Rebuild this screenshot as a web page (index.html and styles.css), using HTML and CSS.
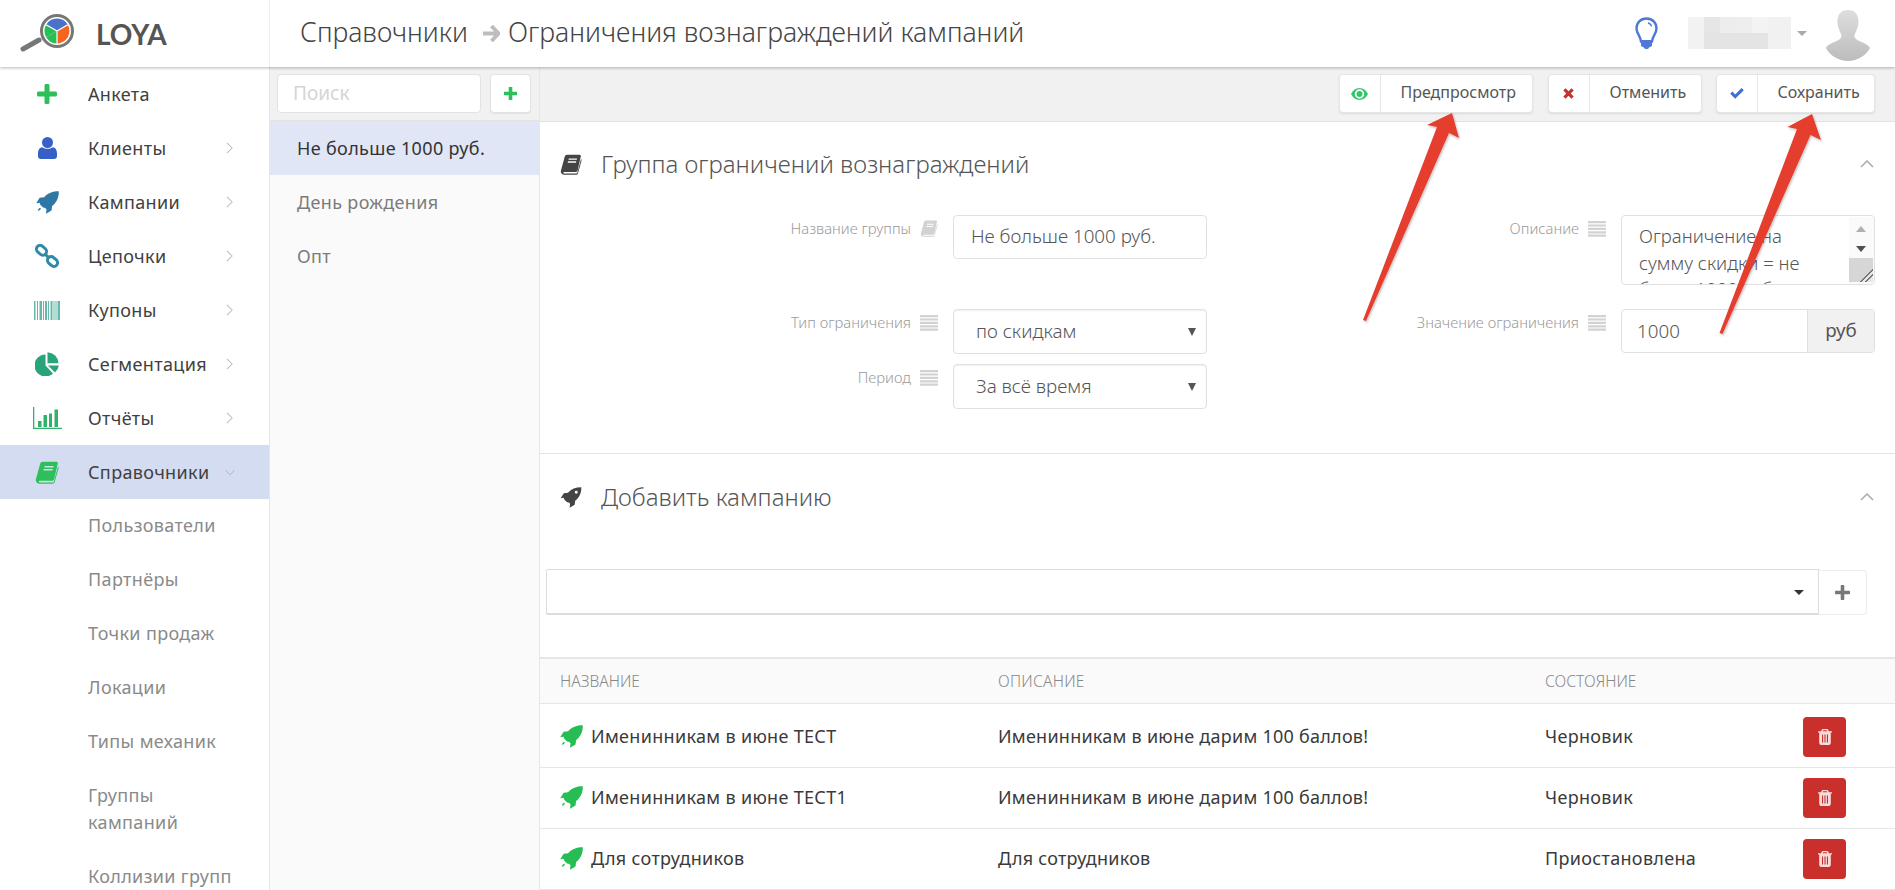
FILE: index.html
```html
<!DOCTYPE html>
<html lang="ru">
<head>
<meta charset="utf-8">
<title>LOYA</title>
<link rel="stylesheet" href="styles.css">
</head>
<body>
<svg class="defs" width="0" height="0" aria-hidden="true">
  <symbol id="i-rocket" viewBox="0 0 24 24"><path d="M23.800.2c.2 6.300-2 11.600-7 15.500l-.6 4.600-5.800 3.500.6-4.800-1.700-1.600c-.9.600-2-.2-3.500-1.700s-2.300-2.600-1.700-3.500L.2 12.800 3.800 7l4.700-.5C12.200 2.200 17.500.2 23.800.2z"/><path d="M4.300 17.400c-1.200.4-2 1.300-2.500 3.300 2-.5 2.900-1.300 3.300-2.500z"/></symbol>
  <symbol id="i-rocket-w" viewBox="0 0 24 24"><path fill-rule="evenodd" d="M23.800.2c.2 6.300-2 11.600-7 15.500l-.6 4.600-5.800 3.500.6-4.800-1.700-1.600c-.9.600-2-.2-3.500-1.700s-2.300-2.600-1.700-3.500L.2 12.800 3.800 7l4.700-.5C12.200 2.200 17.500.2 23.800.2zM18 4.300a1.700 1.700 0 1 0 0 3.400 1.700 1.700 0 0 0 0-3.400z"/></symbol>
  <symbol id="i-book" viewBox="0 0 24 24"><path fill-rule="evenodd" d="M7.500.8H21.800c1.100 0 1.700.9 1.400 2L19.500 18.800c-.4 1.300-1.300 1.900-2.500 1.900H4.600c-1 0-1.500.5-1.300 1 .2.500.6.7 1.300.7H18c.6 0 1-.3 1.200-.9L23.500 5.800c.6.400.8 1.100.5 2l-4 14.200c-.4 1.200-1.300 1.800-2.500 1.800H4.300C2.300 23.800.6 22.400.4 20.600c-.1-.6 0-1.100.1-1.700L4.800 3c.4-1.300 1.400-2.200 2.700-2.200zM9.500 5.200l-.4 1.500h9.500l.4-1.500zM8.600 8.400l-.4 1.500h9.500l.4-1.500z"/></symbol>
  <symbol id="i-lines" viewBox="0 0 18 16"><path d="M0 0h18v2.200H0zM0 3.400h18v2.200H0zM0 6.800h18v2.200H0zM0 10.200h18v2.200H0zM0 13.600h18v2.200H0z"/></symbol>
  <symbol id="i-chev" viewBox="0 0 8 14"><path d="M1 1l6 6-6 6" fill="none" stroke="currentColor" stroke-width="1.200"/></symbol>
  <symbol id="i-trash" viewBox="0 0 14 16"><path fill-rule="evenodd" d="M5 0h4c.7 0 1.200.4 1.400 1l.5 1.200H14v1.300h-1.200v10.300c0 1.200-.8 2.200-1.800 2.200H3c-1 0-1.800-1-1.800-2.200V3.500H0V2.200h3.100L3.600 1C3.800.4 4.300 0 5 0zm-.3 2.200h4.600L8.900 1.200H5.100zM4 5.500v8h1.100v-8zm2.450 0v8h1.100v-8zm2.450 0v8H10v-8z"/></symbol>
</svg>

<div class="app">
  <header class="header">
    <div class="brand">
      <svg class="logo" width="58" height="44" viewBox="0 0 58 44">
        <path d="M5 36l16-9" stroke="#777" stroke-width="5" stroke-linecap="round"/>
        <circle cx="39" cy="18" r="15.500" fill="#fff" stroke="#777" stroke-width="3"/>
        <path d="M39 18V5.500a12.500 12.500 0 0 0-10.800 6.300z" fill="#4a72c9"/>
        <path d="M39 18V5.500a12.500 12.500 0 0 1 10.800 6.300z" fill="#4a72c9"/>
        <path d="M39 18l-10.800 6.200A12.500 12.500 0 0 0 39 30.500z" fill="#26bf55"/>
        <path d="M39 18l-10.800-6.200a12.500 12.500 0 0 0 0 12.400z" fill="#26bf55"/>
        <path d="M39 18v12.500a12.500 12.500 0 0 0 10.800-18.700z" fill="#f5651f"/>
        <path d="M39 18v12.500M39 18l-10.800-6.200M39 18l10.800-6.200" stroke="#fff" stroke-width="1.200" fill="none"/>
      </svg>
      <span class="brand-name">LOYA</span>
    </div>
    <h1 class="crumbs">
      <span>Справочники</span>
      <svg class="crumb-arrow" width="18" height="17" viewBox="0 0 18 17"><path d="M9.500 1l7 7.500-7 7.500M1 8.500h15" fill="none" stroke="#bdbdbd" stroke-width="4"/></svg>
      <span>Ограничения вознаграждений кампаний</span>
    </h1>
    <div class="user">
      <svg class="bulb" width="23" height="34" viewBox="0 0 23 34">
        <path d="M11.500 1.500C5.500 1.500 1.500 6 1.500 11.500c0 5 4 7.500 4.500 13h11c.5-5.500 4.500-8 4.500-13 0-5.500-4-10-10-10z" fill="#fff" stroke="#4f78d8" stroke-width="2.400"/>
        <path d="M6 23h11v6l-3 1.500c-.5 2-4.500 2-5 0L6 29z" fill="#4f78d8"/>
        <path d="M13 6c2 .5 3.200 1.800 3.500 3.500" fill="none" stroke="#4f78d8" stroke-width="1.300"/>
      </svg>
      <div class="blur-name" aria-hidden="true"><i></i><i></i><i></i><i></i><i></i><i></i></div>
      <span class="user-caret"></span>
      <svg class="avatar" width="46" height="52" viewBox="0 0 46 52">
        <defs><linearGradient id="ag" x1="0" y1="0" x2="0" y2="1"><stop offset="0" stop-color="#dedede"/><stop offset="1" stop-color="#bcbcbc"/></linearGradient></defs>
        <path d="M23 1c7 0 10.500 4.500 10.500 11 0 3-.5 5-1.500 8-1 3-2 4-2.500 6.500-.3 1.500.5 3 3 4.500 4.500 2.500 10.500 4 12.500 8-4 7.500-12.500 13-22 13S4.900 46.500.9 39c2-4 8-5.500 12.500-8 2.500-1.500 3.300-3 3-4.500-.5-2.500-1.500-3.500-2.500-6.500-1-3-1.500-5-1.500-8C12.400 5.500 16 1 23 1z" fill="url(#ag)"/>
      </svg>
    </div>
  </header>

  <nav class="sidebar">
    <a class="nav-item"><span class="nav-icon"><svg width="20" height="20" viewBox="0 0 20 20"><path d="M7.500 1.500c0-.8.600-1.500 1.500-1.500h2c.8 0 1.500.7 1.500 1.500v6h6c.8 0 1.500.6 1.500 1.500v2c0 .8-.7 1.500-1.500 1.500h-6v6c0 .8-.7 1.500-1.500 1.500H9c-.9 0-1.500-.7-1.500-1.500v-6h-6C.7 12.500 0 11.800 0 11V9c0-.9.700-1.500 1.500-1.500h6z" fill="#2dc05a"/></svg></span>Анкета</a>
    <a class="nav-item"><span class="nav-icon"><svg width="19" height="22" viewBox="0 0 19 22"><circle cx="9.500" cy="5.500" r="5.500" fill="#3560c8"/><path d="M4.500 10.200c1.300 1 3 1.600 5 1.600s3.700-.6 5-1.600c2.800.2 4.500 2.500 4.500 6.300V19c0 1.800-1.200 3-3 3H3c-1.800 0-3-1.200-3-3v-2.500c0-3.800 1.700-6.100 4.500-6.300z" fill="#3560c8"/></svg></span>Клиенты<svg class="chev"><use href="#i-chev"/></svg></a>
    <a class="nav-item"><span class="nav-icon"><svg class="tint-rocket" width="23" height="23"><use href="#i-rocket"/></svg></span>Кампании<svg class="chev"><use href="#i-chev"/></svg></a>
    <a class="nav-item"><span class="nav-icon"><svg width="24" height="24" viewBox="0 0 24 24" fill="none" stroke="#2e8aa6" stroke-width="3"><rect x="-5.500" y="-3.700" width="11" height="7.400" rx="3.700" transform="translate(6.500 6.300) rotate(42)"/><rect x="-5.500" y="-3.700" width="11" height="7.400" rx="3.700" transform="translate(17.500 17.500) rotate(42)"/><path d="M10 10l4 4"/></svg></span>Цепочки<svg class="chev"><use href="#i-chev"/></svg></a>
    <a class="nav-item"><span class="nav-icon"><svg width="26" height="19" viewBox="0 0 26 19"><path d="M0 0h1.500v19H0zM3 0h1v19H3zM5.500 0h2.500v19H5.500zM9 0h1v19H9zM11 0h2v19h-2zM14 0h1v19h-1zM16.500 0h2v19h-2zM19.500 0h1v19h-1zM21.500 0h1v19h-1zM23.500 0h2.500v19h-2.500z" fill="#66b8ab"/></svg></span>Купоны<svg class="chev"><use href="#i-chev"/></svg></a>
    <a class="nav-item"><span class="nav-icon"><svg width="24" height="24" viewBox="0 0 24 24"><path d="M10.500 2.500v11l7.500 8A11 11 0 1 1 10.500 2.500z" fill="#29a379"/><path d="M12.500.2a11.500 11.500 0 0 1 11 11h-11z" fill="#29a379"/><path d="M13 13.500h10.800a11 11 0 0 1-3.800 7z" fill="#29a379"/></svg></span>Сегментация<svg class="chev"><use href="#i-chev"/></svg></a>
    <a class="nav-item"><span class="nav-icon"><svg width="29" height="22" viewBox="0 0 29 22"><path d="M0 0h1.300v20.700H29V22H0zM5 14h3.500v6H5zM10.500 8h3.500v12h-3.500zM16 6.500h3v13.500h-3zM21.500 2.500h3.500V20h-3.500z" fill="#2fb36b"/></svg></span>Отчёты<svg class="chev"><use href="#i-chev"/></svg></a>
    <a class="nav-item is-active"><span class="nav-icon"><svg class="tint-book" width="24" height="23"><use href="#i-book"/></svg></span>Справочники<svg class="chev chev-down"><use href="#i-chev"/></svg></a>
    <a class="nav-sub">Пользователи</a>
    <a class="nav-sub">Партнёры</a>
    <a class="nav-sub">Точки продаж</a>
    <a class="nav-sub">Локации</a>
    <a class="nav-sub">Типы механик</a>
    <a class="nav-sub">Группы<br>кампаний</a>
    <a class="nav-sub">Коллизии групп</a>
  </nav>

  <aside class="list-panel">
    <div class="list-search">
      <div class="search-input">Поиск</div>
      <div class="search-add"><svg width="13" height="13" viewBox="0 0 13 13"><path d="M4.700 0h3.600v4.700H13v3.600H8.300V13H4.700V8.300H0V4.700h4.700z" fill="#2dc05a"/></svg></div>
    </div>
    <div class="list-row is-selected">Не больше 1000 руб.</div>
    <div class="list-row">День рождения</div>
    <div class="list-row">Опт</div>
  </aside>

  <main class="main">
    <div class="toolbar">
      <div class="tbtn tbtn-1"><span class="tbtn-icon"><svg width="17" height="12" viewBox="0 0 17 12"><path fill-rule="evenodd" d="M8.500 0c3.600 0 6.700 2.200 8.500 6-1.800 3.800-4.900 6-8.500 6S1.800 9.800 0 6c1.800-3.800 4.900-6 8.500-6zm0 1.300a4.700 4.700 0 1 0 0 9.400 4.700 4.700 0 0 0 0-9.400zM8.500 3a3 3 0 1 1 0 6 3 3 0 0 1 0-6z" fill="#35c56a"/></svg></span><span class="tbtn-text">Предпросмотр</span></div>
      <div class="tbtn tbtn-2"><span class="tbtn-icon"><svg width="11" height="11" viewBox="0 0 11 11"><path d="M2.500.3L5.500 3.300 8.500.3l2.200 2.200-3 3 3 3-2.200 2.200-3-3-3 3L.3 8.500l3-3-3-3z" fill="#c9302c"/></svg></span><span class="tbtn-text">Отменить</span></div>
      <div class="tbtn tbtn-3"><span class="tbtn-icon"><svg width="14" height="11" viewBox="0 0 14 11"><path d="M5.200 10.800L.2 5.800l2.200-2.200 2.800 2.800L11.600 0l2.200 2.200z" fill="#3f6fd1"/></svg></span><span class="tbtn-text">Сохранить</span></div>
    </div>

    <section class="section section-group">
      <div class="section-head">
        <svg class="sec-icon"><use href="#i-book"/></svg>
        <h2 class="section-title">Группа ограничений вознаграждений</h2>
        <svg class="sec-chev" width="14" height="8" viewBox="0 0 14 8"><path d="M1 7l6-6 6 6" fill="none" stroke="#aaa" stroke-width="1.500"/></svg>
      </div>
      <div class="form">
        <div class="form-col form-left">
          <div class="field field-first">
            <span class="field-label">Название группы</span>
            <svg class="label-book"><use href="#i-book"/></svg>
            <div class="control control-input">Не больше 1000 руб.</div>
          </div>
          <div class="field field-second">
            <span class="field-label">Тип ограничения</span>
            <svg class="label-lines"><use href="#i-lines"/></svg>
            <div class="control control-select">по скидкам<span class="sel-arrow"></span></div>
          </div>
          <div class="field">
            <span class="field-label">Период</span>
            <svg class="label-lines"><use href="#i-lines"/></svg>
            <div class="control control-select">За всё время<span class="sel-arrow"></span></div>
          </div>
        </div>
        <div class="form-col form-right">
          <div class="field field-area">
            <span class="field-label">Описание</span>
            <svg class="label-lines"><use href="#i-lines"/></svg>
            <div class="control control-area">
              <div class="area-text">Ограничение на<br>сумму скидки = не<br>более 1000 руб</div>
              <div class="area-scroll">
                <span class="sb-up"></span>
                <span class="sb-down"></span>
                <span class="sb-thumb"><span class="sb-grip"></span></span>
              </div>
            </div>
          </div>
          <div class="field">
            <span class="field-label">Значение ограничения</span>
            <svg class="label-lines"><use href="#i-lines"/></svg>
            <div class="control-group">
              <div class="group-input">1000</div>
              <div class="group-addon">руб</div>
            </div>
          </div>
        </div>
      </div>
    </section>

    <section class="section section-add">
      <div class="section-head">
        <svg class="sec-icon"><use href="#i-rocket-w"/></svg>
        <h2 class="section-title">Добавить кампанию</h2>
        <svg class="sec-chev" width="14" height="8" viewBox="0 0 14 8"><path d="M1 7l6-6 6 6" fill="none" stroke="#aaa" stroke-width="1.500"/></svg>
      </div>
      <div class="add-row">
        <div class="add-select"><span class="add-caret"></span></div>
        <div class="add-plus"><svg width="15" height="15" viewBox="0 0 15 15"><path d="M5.700 1c0-.5.400-1 1-1h1.600c.6 0 1 .5 1 1v4.700H14c.5 0 1 .4 1 1v1.600c0 .6-.5 1-1 1H9.300V14c0 .5-.4 1-1 1H6.700c-.6 0-1-.5-1-1V9.300H1c-.5 0-1-.4-1-1V6.700c0-.6.500-1 1-1h4.700z" fill="#777"/></svg></div>
      </div>
      <div class="table">
        <div class="t-head">
          <div class="c-name">Название</div>
          <div class="c-desc">Описание</div>
          <div class="c-state">Состояние</div>
        </div>
        <div class="t-row t-row-first">
          <div class="c-name"><svg class="row-rocket"><use href="#i-rocket"/></svg>Именинникам в июне ТЕСТ</div>
          <div class="c-desc">Именинникам в июне дарим 100 баллов!</div>
          <div class="c-state">Черновик</div>
          <div class="del"><svg width="14" height="16"><use href="#i-trash"/></svg></div>
        </div>
        <div class="t-row">
          <div class="c-name"><svg class="row-rocket"><use href="#i-rocket"/></svg>Именинникам в июне ТЕСТ1</div>
          <div class="c-desc">Именинникам в июне дарим 100 баллов!</div>
          <div class="c-state">Черновик</div>
          <div class="del"><svg width="14" height="16"><use href="#i-trash"/></svg></div>
        </div>
        <div class="t-row">
          <div class="c-name"><svg class="row-rocket"><use href="#i-rocket"/></svg>Для сотрудников</div>
          <div class="c-desc">Для сотрудников</div>
          <div class="c-state">Приостановлена</div>
          <div class="del"><svg width="14" height="16"><use href="#i-trash"/></svg></div>
        </div>
      </div>
    </section>
  </main>
</div>

<svg class="arrows" width="1895" height="890" viewBox="0 0 1895 890" aria-hidden="true">
  <defs><filter id="as" x="-20%" y="-20%" width="140%" height="140%"><feDropShadow dx="1" dy="1.500" stdDeviation="1" flood-color="#000" flood-opacity=".25"/></filter></defs>
  <path filter="url(#as)" d="M1363 320L1437 127 1427 125 1452 113 1459 138 1449 133 1366 321z" fill="#e53c2e"/>
  <path filter="url(#as)" d="M1719.500 333L1797 129 1787.500 127 1812 114 1821 140 1810.500 135 1722.500 334z" fill="#e53c2e"/>
</svg>
</body>
</html>
```
FILE: styles.css
```css
* { box-sizing: border-box; }
html, body { margin: 0; height: 890px; overflow: hidden; background: #fff; }
body { font-family: "Noto Sans", "Open Sans", sans-serif; color: #333; font-size: 18px; }
.defs { position: absolute; }
h1, h2 { margin: 0; font-weight: 300; }

.app {
  display: grid;
  grid-template-columns: 270px 270px 1fr;
  grid-template-rows: 67px 823px;
  height: 890px;
}

/* header */
.header {
  grid-column: 1 / -1;
  display: flex;
  align-items: center;
  background: #fff;
  box-shadow: 0 1px 3px rgba(0, 0, 0, .28);
  position: relative;
  z-index: 2;
}
.brand { width: 270px; height: 67px; display: flex; align-items: center; padding-left: 18px; border-right: 1px solid #f0f0f0; }
.logo { margin-top: 2px; }
.brand-name { margin-left: 20px; font-family: Lato, "Open Sans", sans-serif; font-weight: 700; font-size: 28px; color: #555; }
.crumbs { display: flex; align-items: center; margin-left: 30px; font-size: 26.600px; font-weight: 300; color: #444; margin-top: -4px; }
.crumb-arrow { margin: 3px 8px 0 14px; }
.user { margin-left: auto; display: flex; align-items: center; padding-right: 24px; }
.bulb { margin-right: 30px; }
.blur-name { width: 103px; height: 32px; display: grid; grid-template-columns: 16px 16px 16px 16px 16px 23px; grid-template-rows: 1fr 1fr; background: #f1f1f1; margin-top: -1px; }
.blur-name i { background: #e6e6e6; }
.blur-name i:nth-child(1) { background: #f2f2f2; grid-row: 1 / 3; }
.blur-name i:nth-child(3) { background: #ededed; }
.blur-name i:nth-child(4) { background: #e4e4e4; grid-column: 2 / 6; grid-row: 2; }
.blur-name i:nth-child(5) { background: #eeeeee; }
.blur-name i:nth-child(6) { background: #f3f3f3; }
.user-caret { width: 0; height: 0; margin: 0 18px 0 6px; border: 5px solid transparent; border-top: 5px solid #aaa; border-bottom: 0; }
.avatar { margin-top: 2px; }

/* sidebar */
.sidebar { background: #fff; border-right: 1px solid #e6e6e6; overflow: hidden; }
.nav-item, .nav-sub { font-size: 18px; letter-spacing: .35px; line-height: 27px; }
.nav-item { display: flex; align-items: center; height: 54px; color: #404040; }
.nav-sub { display: block; padding: 13px 0 14px 88px; color: #8a8a8a; }
.nav-item.is-active { background: #d4dcf2; }
.nav-icon { width: 34px; margin: 0 24px 0 30px; display: flex; justify-content: center; flex: none; }
.chev { width: 7px; height: 12px; margin-left: auto; margin-right: 36px; color: #bdbdbd; }
.chev-down { width: 6px; height: 11px; transform: rotate(90deg); color: #aab0c0; margin-right: 36px; }
.tint-rocket { fill: #2f77a5; }
.tint-book { fill: #2dc05a; }

/* list panel */
.list-panel { background: #fafafa; border-right: 1px solid #e6e6e6; }
.list-search { height: 54px; background: #f1f1f1; border-bottom: 1px solid #e2e2e2; display: flex; padding: 7px 8px 0 7px; gap: 9px; }
.search-input { width: 204px; height: 39px; padding: 0 15px; line-height: 37px; background: #fff; border: 1px solid #e2e2e2; border-radius: 4px; color: #d5d5d5; font-size: 19px; }
.search-add { width: 41px; height: 39px; background: #fff; border: 1px solid #e2e2e2; border-radius: 4px; display: flex; align-items: center; justify-content: center; box-shadow: 0 1px 1px rgba(0,0,0,.06); }
.list-row { height: 54px; line-height: 54px; padding-left: 27px; font-size: 18px; letter-spacing: .35px; color: #7b7b7b; }
.list-row.is-selected { background: #e0e6f5; color: #333; }

/* main */
.main { min-width: 0; overflow: hidden; }
.toolbar { height: 55px; background: #f1f1f1; border-bottom: 1px solid #e2e2e2; display: flex; justify-content: flex-end; padding: 7px 20px 0 0; }
.tbtn { height: 39px; display: flex; background: #fff; border: 1px solid #e6e6e6; border-radius: 4px; box-shadow: 0 1px 2px rgba(0,0,0,.1); font-size: 16px; color: #555; }
.tbtn-1 { width: 194px; margin-right: 15px; }
.tbtn-2 { width: 154px; margin-right: 14px; }
.tbtn-3 { width: 159.500px; }
.tbtn-icon { width: 41px; display: flex; align-items: center; justify-content: center; border-right: 1px solid #e6e6e6; flex: none; }
.tbtn-text { line-height: 35px; padding-left: 20px; white-space: nowrap; }

.section-group { height: 332px; border-bottom: 1px solid #e4e4e4; padding-top: 20px; }
.section-add { padding-top: 21px; }
.section-head { height: 44px; display: flex; align-items: center; padding: 0 21px 0 20px; }
.sec-icon { width: 22px; height: 21px; fill: #444; flex: none; }
.section-title { margin: -2px 0 0 19px; font-size: 24px; font-weight: 300; color: #555; }
.sec-chev { margin-left: auto; }

.form { display: flex; margin-top: 29px; }
.form-col { display: flex; flex-direction: column; }
.form-left { width: 667px; }
.form-right { width: 668px; }
.field { display: flex; align-items: flex-start; }
.field-first { margin-bottom: 50px; }
.field-second { margin-bottom: 10px; }
.field-area { margin-bottom: 24px; }
.field-label { flex: 1; text-align: right; font-size: 14.800px; line-height: 18px; padding-top: 4px; color: #9a9a9a; font-weight: 300; }
.label-lines { width: 18px; height: 16px; margin: 6px 15px 0 9px; fill: #d2d2d2; flex: none; }
.label-book { width: 18px; height: 17px; margin: 5px 15px 0 9px; fill: #d2d2d2; flex: none; }
.control { position: relative; width: 254px; background: #fff; border: 1px solid #e0e0e0; border-radius: 4px; color: #555; font-size: 18.800px; font-weight: 300; flex: none; }
.control-input { height: 44px; line-height: 40px; padding-left: 17px; }
.control-select { height: 45px; line-height: 42px; padding-left: 22px; box-shadow: inset 0 1px 2px rgba(0,0,0,.06); }
.sel-arrow { position: absolute; right: 10px; top: 18px; border: 4px solid transparent; border-top: 8px solid #555; border-bottom: 0; }
.control-area { height: 70px; overflow: hidden; }
.area-text { padding: 7px 0 0 17px; line-height: 26.500px; font-size: 18.500px; white-space: nowrap; }
.area-scroll { position: absolute; top: 1px; right: 0; bottom: 0; width: 25px; background: #fafafa; }
.sb-up, .sb-down { position: absolute; left: 7px; border: 5px solid transparent; }
.sb-up { top: 9px; border-bottom: 6px solid #b0b0b0; border-top: 0; }
.sb-down { top: 29px; border-top: 6px solid #505050; border-bottom: 0; }
.sb-thumb { position: absolute; left: 0; right: 1px; bottom: 2px; height: 24px; background: #d6d6d6; }
.sb-grip { position: absolute; right: 0; bottom: 0; width: 13px; height: 13px; background: linear-gradient(135deg, transparent 0 48%, #777 48% 54%, #e6e6e6 54% 68%, #777 68% 74%, #e6e6e6 74%); }
.control-group { width: 254px; height: 44px; display: flex; flex: none; border: 1px solid #e0e0e0; border-radius: 4px; overflow: hidden; color: #555; font-size: 18.800px; }
.group-input { flex: 1; padding-left: 15px; line-height: 42px; font-weight: 300; }
.group-addon { width: 67px; background: #f1f1f1; border-left: 1px solid #e0e0e0; text-align: center; line-height: 40px; }

.add-row { display: flex; margin: 50px 28px 0 6px; }
.add-select { flex: 1; height: 46px; position: relative; border: 1px solid #dcdcdc; border-bottom-width: 2px; border-radius: 2px 0 0 2px; background: #fff; }
.add-caret { position: absolute; right: 14px; top: 20px; border: 5px solid transparent; border-top: 5px solid #333; border-bottom: 0; }
.add-plus { width: 48px; height: 45px; margin-top: 1px; display: flex; align-items: center; justify-content: center; border: 1px solid #ececec; border-left: 0; border-radius: 0 4px 4px 0; }

.table { margin-top: 42px; }
.t-head, .t-row { display: flex; align-items: center; padding-left: 20px; border-bottom: 1px solid #e6e6e6; }
.t-head { height: 47px; background: #fafafa; border-top: 2px solid #e6e6e6; font-size: 15.500px; font-weight: 300; color: #888; text-transform: uppercase; }
.t-row { height: 61px; font-size: 18px; letter-spacing: .32px; color: #3a3a3a; }
.t-row > div { line-height: 26px; margin-top: -2px; }
.t-row-first { height: 64px; padding-top: 3px; }
.c-name { width: 438px; display: flex; align-items: center; flex: none; }
.c-desc { width: 547px; flex: none; letter-spacing: .25px; }
.c-state { width: 258px; flex: none; }
.row-rocket { width: 23px; height: 23px; margin-right: 8px; fill: #27bd55; flex: none; }
.t-row > .del { width: 43px; height: 40px; margin-top: 0; background: #c9302c; border-radius: 4px; display: flex; align-items: center; justify-content: center; fill: #f7dcdb; flex: none; }

.arrows { position: absolute; left: 0; top: 0; z-index: 5; pointer-events: none; }
```
